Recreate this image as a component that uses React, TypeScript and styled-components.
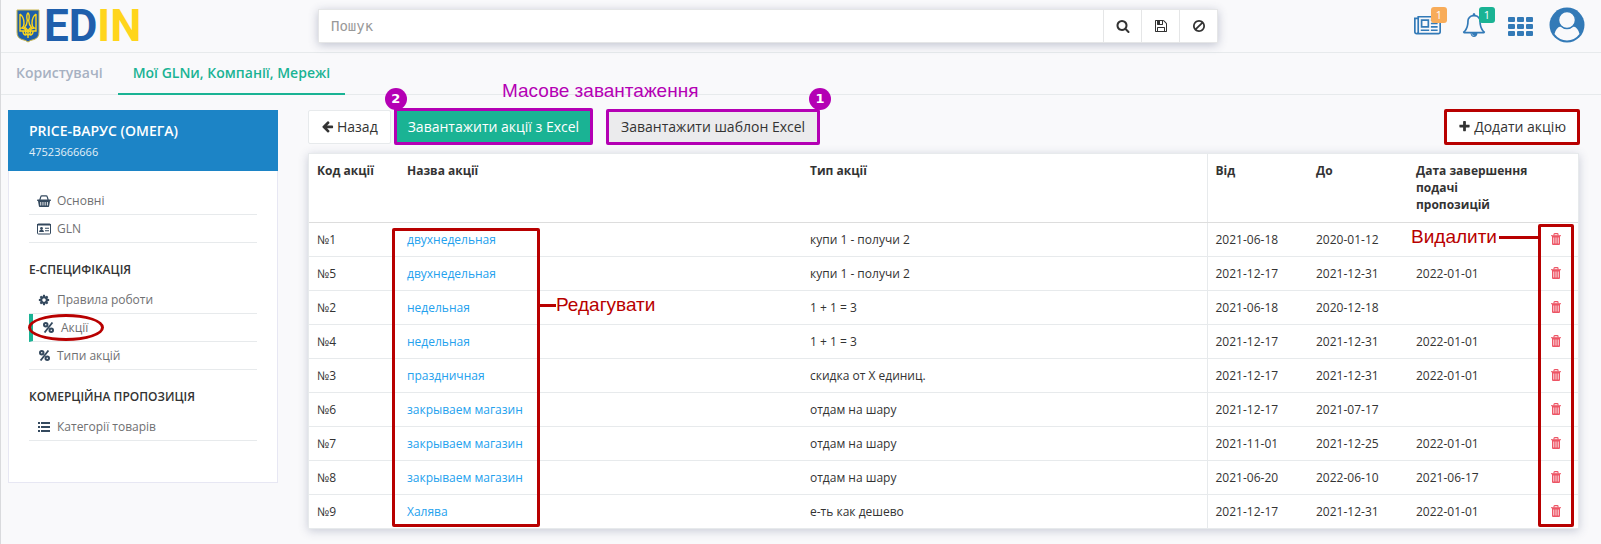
import React from "react";
import styled, { createGlobalStyle, css } from "styled-components";

const Global = createGlobalStyle`
  *, *::before, *::after { box-sizing: border-box; }
  body {
    margin: 0;
    background: #f9f9fb;
    color: #333;
    font: 12px/17px "Open Sans", "Noto Sans", sans-serif;
  }
  button, input { font: inherit; color: inherit; }
  a { text-decoration: none; }
`;

/* ---------- icons ---------- */

const PATHS = {
  search: "M1216 832q0-185-131.5-316.5t-316.5-131.5-316.5 131.5-131.5 316.5 131.5 316.5 316.5 131.5 316.5-131.5 131.5-316.5zm512 832q0 52-38 90t-90 38q-54 0-90-38l-343-342q-179 124-399 124-143 0-273.5-55.5t-225-150-150-225-55.5-273.5 55.5-273.5 150-225 225-150 273.5-55.5 273.5 55.5 225 150 150 225 55.5 273.5q0 220-124 399l343 343q37 37 37 90z",
  save: "M512 1536h768v-384h-768v384zm896 0h128v-896q0-14-10-38.5t-20-34.5l-281-281q-10-10-34-20t-39-10v416q0 40-28 68t-68 28h-576q-40 0-68-28t-28-68v-416h-128v1280h128v-416q0-40 28-68t68-28h832q40 0 68 28t28 68v416zm-384-928v-320q0-13-9.5-22.5t-22.5-9.5h-192q-13 0-22.5 9.5t-9.5 22.5v320q0 13 9.5 22.5t22.5 9.5h192q13 0 22.5-9.5t9.5-22.5zm640 32v928q0 40-28 68t-68 28h-1344q-40 0-68-28t-28-68v-1344q0-40 28-68t68-28h928q40 0 88 20t76 48l280 280q28 28 48 76t20 88z",
  ban: "M1440 893q0-161-87-295l-754 753q137 89 297 89 111 0 211.5-43.5t173.5-116.5 116-174.5 43-212.5zm-999 299l755-754q-135-91-300-91-148 0-273 73t-198 199-73 274q0 162 89 299zm1223-299q0 157-61 300t-163.5 246-245 164-298.5 61-298.5-61-245-164-163.5-246-61-300 61-299.5 163.5-245.5 245-164 298.5-61 298.5 61 245 164 163.5 245.5 61 299.5z",
  cog: "M1152 896q0-106-75-181t-181-75-181 75-75 181 75 181 181 75 181-75 75-181zm512-109v222q0 12-8 23t-20 13l-185 28q-19 54-39 91 35 50 107 138 10 12 10 25t-9 23q-27 37-99 108t-94 71q-12 0-26-9l-138-108q-44 23-91 38-16 136-29 186-7 28-36 28h-222q-14 0-24.5-8.5t-11.5-21.5l-28-184q-49-16-90-37l-141 107q-10 9-25 9-14 0-25-11-126-114-165-168-7-10-7-23 0-12 8-23 15-21 51-66.5t54-70.5q-27-50-41-99l-183-27q-13-2-21-12.5t-8-23.5v-222q0-12 8-23t19-13l186-28q14-46 39-92-40-57-107-138-10-12-10-24 0-10 9-23 26-36 98.5-107.5t94.5-71.5q13 0 26 10l138 107q44-23 91-38 16-136 29-186 7-28 36-28h222q14 0 24.5 8.5t11.5 21.5l28 184q49 16 90 37l142-107q9-9 24-9 13 0 25 10 129 119 165 170 7 8 7 22 0 12-8 23-15 21-51 66.5t-54 70.5q26 50 41 98l183 28q13 2 21 12.5t8 23.5z",
  back: "M1664 896v128q0 53-32.5 90.5t-84.5 37.5h-704l293 294q38 36 38 90t-38 90l-75 76q-37 37-90 37-52 0-91-37l-651-652q-37-37-37-90 0-52 37-91l651-650q38-38 91-38 52 0 90 38l75 74q38 38 38 91t-38 91l-293 293h704q52 0 84.5 37.5t32.5 90.5z",
  plus: "M1600 736v192q0 40-28 68t-68 28h-416v416q0 40-28 68t-68 28h-192q-40 0-68-28t-28-68v-416h-416q-40 0-68-28t-28-68v-192q0-40 28-68t68-28h416v-416q0-40 28-68t68-28h192q40 0 68 28t28 68v416h416q40 0 68 28t28 68z",
  bell: "M912 1696q0-16-16-16-59 0-101.5-42.5t-42.5-101.5q0-16-16-16t-16 16q0 73 51.5 124.5t124.5 51.5q16 0 16-16zm-666-288h1300q-266-300-266-832 0-51-24-105t-69-103-121.5-80.5-169.5-31.5-169.5 31.5-121.5 80.5-69 103-24 105q0 532-266 832zm1482 0q0 52-38 90t-90 38h-448q0 106-75 181t-181 75-181-75-75-181h-448q-52 0-90-38t-38-90q50-42 91-88t85-119.5 74.5-158.5 50-206 19.5-260q0-152 117-282.5t307-158.5q-8-19-8-39 0-40 28-68t68-28 68 28 28 68q0 20-8 39 190 28 307 158.5t117 282.5q0 139 19.5 260t50 206 74.5 158.5 85 119.5 91 88z",
  news: "M1024 512h-384v384h384v-384zm128 640v128h-640v-128h640zm0-768v640h-640v-640h640zm640 768v128h-512v-128h512zm0-256v128h-512v-128h512zm0-256v128h-512v-128h512zm0-256v128h-512v-128h512zm-1536 960v-960h-128v960q0 26 19 45t45 19 45-19 19-45zm1664 0v-1088h-1536v1088q0 33-11 64h1483q26 0 45-19t19-45zm128-1216v1216q0 80-56 136t-136 56h-1664q-80 0-136-56t-56-136v-1088h256v-128h1792z",
  list: "M0 320h256v224h-256zM384 320h1408v224h-1408zM0 704h256v224h-256zM384 704h1408v224h-1408zM0 1088h256v224h-256zM384 1088h1408v224h-1408zM0 1472h256v224h-256zM384 1472h1408v224h-1408z",
};
type IconName = keyof typeof PATHS;

const Svg = styled.svg`
  display: block;
  flex: none;
  fill: currentColor;
`;

const Icon = ({ name, size = 14 }: { name: IconName; size?: number }) => (
  <Svg
    width={name === "news" ? Math.round((size * 8) / 7) : size}
    height={size}
    viewBox={name === "news" ? "0 0 2048 1792" : "0 0 1792 1792"}
    aria-hidden
  >
    <path d={PATHS[name]} fillRule="evenodd" />
  </Svg>
);

const GridIcon = () => (
  <Svg width="25" height="19" viewBox="0 0 25 19" aria-hidden>
    {[0, 7, 14].map((y) => [0, 9, 18].map((x) => (
      <rect key={`${x}-${y}`} x={x} y={y} width="7" height="5" rx="1" />
    )))}
  </Svg>
);

const ListIcon = () => (
  <Svg width="12" height="10" viewBox="0 0 12 10" aria-hidden>
    <path d="M0 0h2v2H0zM3 0h9v2H3zM0 4h2v2H0zM3 4h9v2H3zM0 8h2v2H0zM3 8h9v2H3z" />
  </Svg>
);

const TrashIcon = () => (
  <Svg width="10" height="12" viewBox="0 0 10 12" aria-hidden>
    <path d="M3 2.500V1.300Q3 .6 3.700.6H6.300Q7 .6 7 1.300V2.500" fill="none" stroke="currentColor" strokeWidth="1.100" />
    <path d="M0 2.200h10v1H0z" />
    <path fillRule="evenodd" d="M1 3h8v7.800Q9 12 8 12H2Q1 12 1 10.800zM2.400 4.500v6h.8v-6zM4.600 4.500v6h.8v-6zM6.800 4.500v6h.8v-6z" />
  </Svg>
);

const PercentIcon = () => (
  <Svg width="11" height="11" viewBox="0 0 12 12" aria-hidden>
    <g fill="none" stroke="currentColor" strokeWidth="2.200">
      <circle cx="3" cy="3" r="1.900" />
      <circle cx="9" cy="9" r="1.900" />
      <path d="M10.300 .6L1.700 11.400" strokeWidth="2" />
    </g>
  </Svg>
);

const BasketIcon = () => (
  <Svg width="14" height="14" viewBox="0 0 14 14" aria-hidden>
    <path d="M2.800 6L3.800 2.700Q4 1.800 4.900 1.800H9.100Q10 1.800 10.200 2.700L11.200 6" fill="none" stroke="currentColor" strokeWidth="1.200" />
    <path fillRule="evenodd" d="M.7 5.500h12.600q.7 0 .7.800t-.7.800H13l-.9 5.200q-.1.700-.8.700H2.700q-.7 0-.8-.7L1 7.100H.7q-.7 0-.7-.8t.7-.8zM3.300 8v3.500h.9V8zM5.500 8v3.500h.9V8zM7.700 8v3.500h.9V8zM9.900 8v3.500h.9V8z" />
  </Svg>
);

const CardIcon = () => (
  <Svg width="14" height="12" viewBox="0 0 14 12" aria-hidden>
    <rect x=".5" y="1" width="13" height="10" rx=".8" fill="none" stroke="currentColor" />
    <path d="M0 1h14v1.500H0z" />
    <circle cx="4.500" cy="5.500" r="1.400" />
    <path d="M2 9q0-2.200 2.500-2.200T7 9zM8 4.800h4v1H8zM8 7.200h4v1H8z" />
  </Svg>
);

const UserIcon = () => (
  <Svg width="36" height="36" viewBox="0 0 36 36" aria-hidden>
    <circle cx="18" cy="18" r="17.500" />
    <path d="M5.500 27Q7 20.500 11.500 19.500Q18 24 24.500 19.500Q29 20.500 30.500 27Q25.500 33.500 18 33.500T5.500 27z" fill="#f9f9fb" />
    <circle cx="18" cy="13" r="8.500" fill="#f9f9fb" stroke="currentColor" strokeWidth="1.500" />
  </Svg>
);

const Emblem = () => (
  <Svg width="24" height="34" viewBox="0 0 24 34" aria-hidden>
    <path d="M1 1h22v22q0 6-5 7.500-4 .8-6 2.500-2-1.700-6-2.500-5-1.500-5-7.500z" fill="#1f5fa8" stroke="#c9b54a" />
    <g fill="none" stroke="#fdd51a" strokeWidth="1.400">
      <path d="M4 5v17h5.500M20 5v17h-5.500M4 5q4 3 4 9 0 4-2 5 4 .5 4.500 4M20 5q-4 3-4 9 0 4 2 5-4 .5-4.500 4" />
      <path d="M12 4q-2 2-.7 7.500Q11 16 8.500 18.500q3 1 3.500 5 .5-4 3.500-5Q13 16 12.700 11.500 14 6 12 4z" />
      <path d="M9.500 22q0 4 2.500 4t2.500-4M7 22q0 4 3 4M17 22q0 4-3 4M12 23v6" />
    </g>
  </Svg>
);

/* ---------- header ---------- */

const Page = styled.div`
  min-height: 100vh;
  border-left: 1px solid #d9dadd;
`;

const Header = styled.header`
  display: flex;
  align-items: flex-start;
  height: 53px;
  padding: 0 16px 0 15px;
  border-bottom: 1px solid #e7eaec;
`;

const Logo = styled.a`
  display: flex;
  align-items: center;
  gap: 4px;
  width: 302px;
  height: 52px;
  flex: none;
`;

const Wordmark = styled.span`
  font: 700 44px/52px Roboto, sans-serif;
  color: #1f5fac;
`;
const WordmarkAccent = styled.span`
  color: #ffd51c;
`;

const SearchBar = styled.form`
  display: flex;
  flex: 0 1 900px;
  height: 34px;
  margin-top: 9px;
  background: #fff;
  border: 1px solid #e5e6e7;
  box-shadow: 0 2px 9px rgba(60, 70, 110, 0.3);
`;
const SearchInput = styled.input`
  flex: 1;
  min-width: 0;
  padding: 0 12px;
  border: 0;
  background: none;
  outline: 0;
  font: 14px/20px "DejaVu Sans Mono", monospace;
  &::placeholder { color: #999; opacity: 1; }
`;
const SearchButton = styled.button`
  display: grid;
  place-items: center;
  width: 38px;
  padding: 0;
  border: 0;
  border-left: 1px solid #e5e6e7;
  background: none;
`;

const Tools = styled.nav`
  display: flex;
  align-items: flex-start;
  margin-left: auto;
  color: #337ab7;
`;
const Tool = styled.a<{ $w: number; $top: number }>`
  position: relative;
  width: ${(p) => p.$w}px;
  padding-top: ${(p) => p.$top}px;
  color: inherit;
`;
const Count = styled.span<{ $color: string }>`
  position: absolute;
  top: 7px;
  left: 17px;
  width: 16px;
  height: 16px;
  border-radius: 3px;
  background: ${(p) => p.$color};
  color: #fff;
  font-size: 11px;
  line-height: 16px;
  text-align: center;
`;

const Tabs = styled.nav`
  display: flex;
  height: 42px;
  border-bottom: 1px solid #e7eaec;
`;
const Tab = styled.a<{ $active?: boolean }>`
  height: 42px;
  padding: 0 15px;
  color: #a7b1c2;
  font-size: 14px;
  font-weight: 600;
  line-height: 40px;
  ${(p) => p.$active && css`
    color: #1ab394;
    border-bottom: 2px solid #1ab394;
  `}
`;

/* ---------- layout ---------- */

const Body = styled.div`
  display: flex;
  align-items: flex-start;
  gap: 30px;
  padding: 15px 22px 14px 7px;
`;

const Sidebar = styled.aside`
  flex: none;
  width: 270px;
`;
const Company = styled.div`
  height: 61px;
  padding: 10px 21px;
  background: #1c84c6;
  color: #fff;
`;
const CompanyName = styled.h1`
  margin: 0;
  font-size: 14px;
  font-weight: 600;
  line-height: 22px;
`;
const CompanyCode = styled.div`
  font-size: 11px;
  line-height: 20px;
  color: #e3f0f8;
`;
const MenuBox = styled.div`
  padding: 16px 20px 41px;
  background: #fff;
  border: 1px solid #e7e7f3;
  border-top: 0;
`;
const MenuTitle = styled.h2`
  margin: 17px 0 6px;
  font-size: 12px;
  font-weight: 600;
  line-height: 20px;
`;
const Menu = styled.ul`
  margin: 0;
  padding: 0;
  list-style: none;
`;
const MenuItem = styled.li<{ $active?: boolean }>`
  position: relative;
  border-bottom: 1px solid #e7eaec;
  ${(p) => p.$active && css`border-left: 4px solid #1ab394;`}
`;
const MenuLink = styled.a`
  display: flex;
  align-items: center;
  gap: 6px;
  height: 27px;
  padding-left: 8px;
  color: #6f7072;
`;
const MenuIcon = styled.span`
  display: flex;
  justify-content: center;
  width: 14px;
  color: #34495e;
`;

const Content = styled.main`
  position: relative;
  flex: 1;
  min-width: 0;
`;
const Actions = styled.div`
  display: flex;
  height: 34px;
  margin-bottom: 9px;
`;
const Button = styled.button<{ $kind?: "primary" | "muted" }>`
  position: relative;
  display: flex;
  align-items: center;
  gap: 3px;
  height: 34px;
  padding: 0 12px 2px;
  border: 1px solid #e7eaec;
  border-radius: 2px;
  background: #fff;
  font-size: 14px;
  white-space: nowrap;
  ${(p) => p.$kind === "primary" && css`
    margin-left: 4px;
    background: #1ab394;
    border-color: #1ab394;
    color: #fff;
  `}
  ${(p) => p.$kind === "muted" && css`
    margin-left: 15px;
    padding: 0 13px 2px;
    background: #ebebed;
  `}
`;
const Spacer = styled.div`
  flex: 1;
`;

const Card = styled.div`
  background: #fff;
  border: 1px solid #e7eaec;
  box-shadow: 0 2px 9px rgba(60, 70, 110, 0.25);
`;
const Table = styled.table`
  width: 100%;
  table-layout: fixed;
  border-collapse: collapse;
`;
const Column = styled.col<{ $w?: string }>`
  width: ${(p) => p.$w ?? "auto"};
`;
const HeadCell = styled.th<{ $rule?: boolean }>`
  height: 68px;
  padding: 8px;
  text-align: left;
  vertical-align: top;
  font-weight: 700;
  border-bottom: 1px solid #ddd;
  ${(p) => p.$rule && css`border-left: 1px solid #e7eaec;`}
`;
const Cell = styled.td<{ $rule?: boolean }>`
  height: 34px;
  padding: 8px;
  border-bottom: 1px solid #e7eaec;
  ${(p) => p.$rule && css`border-left: 1px solid #e7eaec;`}
  tr:last-child > & { border-bottom: 0; }
`;
const NameLink = styled.a`
  color: #23a1ee;
`;
const DeleteButton = styled.button`
  display: block;
  padding: 0;
  border: 0;
  background: none;
  color: #ed5565;
`;

/* ---------- callouts laid over the page ---------- */

const RED = "#b80000";
const VIOLET = "#b400b4";

const Frame = styled.span<{ $color: string; $inset: string }>`
  position: absolute;
  inset: ${(p) => p.$inset};
  border: 3px solid ${(p) => p.$color};
  border-radius: 2px;
  pointer-events: none;
`;
const Ring = styled(Frame)`
  border-radius: 50%;
`;
const Step = styled.span<{ $side: "left" | "right" }>`
  position: absolute;
  top: -23px;
  ${(p) => (p.$side === "left" ? "left: -11px;" : "right: -13px;")}
  width: 22px;
  height: 22px;
  border-radius: 50%;
  background: ${VIOLET};
  color: #fff;
  font: 700 13px/22px "DejaVu Sans", sans-serif;
  text-align: center;
`;
const NoteText = styled.span`
  position: absolute;
  top: -29px;
  left: 194px;
  color: ${VIOLET};
  font: 19px/20px "Liberation Sans", sans-serif;
  white-space: nowrap;
`;
const EditNote = styled.div`
  position: absolute;
  top: 118px;
  left: 84px;
  width: 148px;
  height: 299px;
  border: 3px solid ${RED};
  border-radius: 2px;
  pointer-events: none;
`;
const DeleteNote = styled(EditNote)`
  top: 114px;
  left: auto;
  right: 5px;
  width: 36px;
  height: 303px;
`;
const Pointer = styled.span<{ $side: "left" | "right" }>`
  position: absolute;
  top: ${(p) => (p.$side === "right" ? 64 : 0)}px;
  ${(p) => (p.$side === "right" ? "left" : "right")}: 100%;
  display: flex;
  align-items: center;
  color: ${RED};
  font: 19px/20px "Liberation Sans", sans-serif;
  white-space: nowrap;
  &::before, &::after {
    height: 3px;
    background: ${RED};
  }
  ${(p) => p.$side === "right"
    ? css`&::before { content: ""; width: 19px; }`
    : css`gap: 2px; &::after { content: ""; width: 42px; }`}
`;

/* ---------- data ---------- */

const ROWS: [string, string, string, string, string, string][] = [
  ["№1", "двухнедельная", "купи 1 - получи 2", "2021-06-18", "2020-01-12", ""],
  ["№5", "двухнедельная", "купи 1 - получи 2", "2021-12-17", "2021-12-31", "2022-01-01"],
  ["№2", "недельная", "1 + 1 = 3", "2021-06-18", "2020-12-18", ""],
  ["№4", "недельная", "1 + 1 = 3", "2021-12-17", "2021-12-31", "2022-01-01"],
  ["№3", "праздничная", "скидка от X единиц.", "2021-12-17", "2021-12-31", "2022-01-01"],
  ["№6", "закрываем магазин", "отдам на шару", "2021-12-17", "2021-07-17", ""],
  ["№7", "закрываем магазин", "отдам на шару", "2021-11-01", "2021-12-25", "2022-01-01"],
  ["№8", "закрываем магазин", "отдам на шару", "2021-06-20", "2022-06-10", "2021-06-17"],
  ["№9", "Халява", "е-ть как дешево", "2021-12-17", "2021-12-31", "2022-01-01"],
];

const Entry = ({ icon, label, active }: { icon: React.ReactNode; label: string; active?: boolean }) => (
  <MenuItem $active={active}>
    <MenuLink href="#"><MenuIcon>{icon}</MenuIcon>{label}</MenuLink>
    {active && <Ring $color={RED} $inset="0 153px 0 -5px" />}
  </MenuItem>
);

export default function App() {
  return (
    <Page>
      <Global />
      <Header>
        <Logo href="#" aria-label="EDIN">
          <Emblem />
          <Wordmark>ED<WordmarkAccent>IN</WordmarkAccent></Wordmark>
        </Logo>
        <SearchBar onSubmit={(e) => e.preventDefault()}>
          <SearchInput placeholder="Пошук" aria-label="Пошук" />
          <SearchButton aria-label="Шукати"><Icon name="search" /></SearchButton>
          <SearchButton type="button" aria-label="Зберегти"><Icon name="save" /></SearchButton>
          <SearchButton type="button" aria-label="Очистити"><Icon name="ban" /></SearchButton>
        </SearchBar>
        <Tools>
          <Tool $w={48} $top={14} href="#" aria-label="Новини"><Icon name="news" size={24} /><Count $color="#f8ac59">1</Count></Tool>
          <Tool $w={46} $top={13} href="#" aria-label="Сповіщення"><Icon name="bell" size={24} /><Count $color="#1ab394">1</Count></Tool>
          <Tool $w={41} $top={17} href="#" aria-label="Сервіси"><GridIcon /></Tool>
          <Tool $w={36} $top={7} href="#" aria-label="Профіль"><UserIcon /></Tool>
        </Tools>
      </Header>
      <Tabs>
        <Tab href="#">Користувачі</Tab>
        <Tab href="#" $active>Мої GLNи, Компанії, Мережі</Tab>
      </Tabs>
      <Body>
        <Sidebar>
          <Company>
            <CompanyName>PRICE-ВАРУС (ОМЕГА)</CompanyName>
            <CompanyCode>47523666666</CompanyCode>
          </Company>
          <MenuBox>
            <Menu>
              <Entry icon={<BasketIcon />} label="Основні" />
              <Entry icon={<CardIcon />} label="GLN" />
            </Menu>
            <MenuTitle>Е-СПЕЦИФІКАЦІЯ</MenuTitle>
            <Menu>
              <Entry icon={<Icon name="cog" size={12} />} label="Правила роботи" />
              <Entry icon={<PercentIcon />} label="Акції" active />
              <Entry icon={<PercentIcon />} label="Типи акцій" />
            </Menu>
            <MenuTitle>КОМЕРЦІЙНА ПРОПОЗИЦІЯ</MenuTitle>
            <Menu>
              <Entry icon={<ListIcon />} label="Категорії товарів" />
            </Menu>
          </MenuBox>
        </Sidebar>
        <Content>
          <Actions>
            <Button><Icon name="back" size={13} />Назад</Button>
            <Button $kind="primary">
              Завантажити акції з Excel
              <Frame $color={VIOLET} $inset="-3px -2px -2px" />
              <Step $side="left">2</Step>
            </Button>
            <Button $kind="muted">
              Завантажити шаблон Excel
              <Frame $color={VIOLET} $inset="-2px" />
              <Step $side="right">1</Step>
            </Button>
            <Spacer />
            <Button>
              <Icon name="plus" size={13} />Додати акцію
              <Frame $color={RED} $inset="-2px" />
            </Button>
          </Actions>
          <NoteText>Масове завантаження</NoteText>
          <Card>
            <Table>
              <colgroup>
                <Column $w="90px" /><Column $w="403px" /><Column />
                <Column $w="101px" /><Column $w="100px" /><Column $w="135px" /><Column $w="35px" />
              </colgroup>
              <thead>
                <tr>
                  <HeadCell>Код акції</HeadCell>
                  <HeadCell>Назва акції</HeadCell>
                  <HeadCell>Тип акції</HeadCell>
                  <HeadCell $rule>Від</HeadCell>
                  <HeadCell>До</HeadCell>
                  <HeadCell>Дата завершення подачі пропозицій</HeadCell>
                  <HeadCell aria-label="Дії" />
                </tr>
              </thead>
              <tbody>
                {ROWS.map(([code, name, type, from, to, due]) => (
                  <tr key={code}>
                    <Cell>{code}</Cell>
                    <Cell><NameLink href="#">{name}</NameLink></Cell>
                    <Cell>{type}</Cell>
                    <Cell $rule>{from}</Cell>
                    <Cell>{to}</Cell>
                    <Cell>{due}</Cell>
                    <Cell><DeleteButton aria-label="Видалити"><TrashIcon /></DeleteButton></Cell>
                  </tr>
                ))}
              </tbody>
            </Table>
          </Card>
          <EditNote><Pointer $side="right">Редагувати</Pointer></EditNote>
          <DeleteNote><Pointer $side="left">Видалити</Pointer></DeleteNote>
        </Content>
      </Body>
    </Page>
  );
}
